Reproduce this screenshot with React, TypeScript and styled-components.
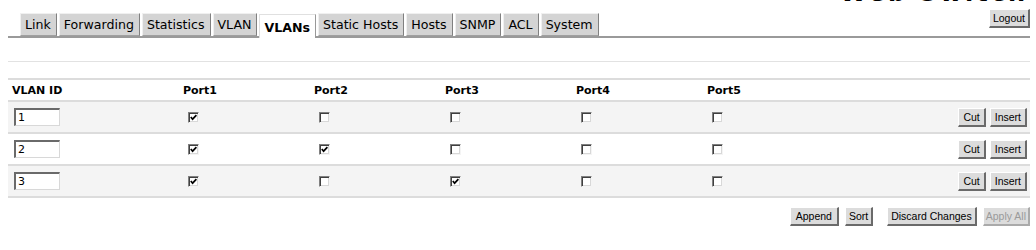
import React from "react";
import styled, { createGlobalStyle, css } from "styled-components";

const GlobalStyle = createGlobalStyle`
  body {
    margin: 0;
    background: #fff;
    font-family: "DejaVu Sans", Verdana, sans-serif;
    color: #000;
  }
`;

const Page = styled.div`
  padding: 0 6px 0 8px;
`;

const TitleClip = styled.div`
  height: 3px;
  overflow: hidden;
  display: flex;
  justify-content: flex-end;
  align-items: flex-end;
  h1 {
    margin: 0 2px 0 0;
    font-size: 24px;
    line-height: 19px;
    font-weight: bold;
    letter-spacing: 3px;
  }
`;

const Header = styled.div`
  display: flex;
  align-items: flex-end;
  justify-content: space-between;
  border-bottom: 2px solid #9a9a9a;
  margin-top: 6px;
  padding-left: 12px;
`;

const Tabs = styled.div`
  display: flex;
  align-items: flex-end;
  gap: 2px;
`;

const Tab = styled.div<{ $active?: boolean }>`
  font-size: 12.6px;
  height: 21px;
  line-height: 22px;
  padding: 0 5px 0 4px;
  background: #d4d4d4;
  border-top: 1px solid #f0f0f0;
  border-left: 1px solid #f0f0f0;
  border-right: 1px solid #808080;
  border-bottom: 1px solid #a0a0a0;
  ${(p) =>
    p.$active &&
    css`
      background: #fff;
      font-weight: bold;
      height: 23px;
      line-height: 25px;
      margin-bottom: -2px;
      border-top: 1px solid #e0e0e0;
      border-left: 1px solid #e0e0e0;
      border-right: 1px solid #999;
      border-bottom: none;
    `}
`;

const Button = styled.button<{ $disabled?: boolean; $pad?: number }>`
  font-family: "Liberation Sans", Tahoma, sans-serif;
  font-size: 10.5px;
  height: 19px;
  padding: 0 ${(p) => p.$pad ?? 4}px;
  background: #dcdcdc;
  color: ${(p) => (p.$disabled ? "#9a9a9a" : "#000")};
  border-top: 1px solid #fff;
  border-left: 1px solid #fff;
  border-right: 2px solid #6a6a6a;
  border-bottom: 2px solid #6a6a6a;
  ${(p) =>
    p.$disabled &&
    css`
      border-right-color: #aaa;
      border-bottom-color: #aaa;
    `}
`;

const LogoutButton = styled(Button)`
  margin-bottom: 8px;
  padding: 0 3px;
`;

const Divider = styled.div`
  height: 1px;
  background: #e2e2e2;
  margin-top: 23px;
`;

const Table = styled.div`
  margin-top: 16px;
  border-bottom: 2px solid #dcdcdc;
`;

const Row = styled.div<{ $shaded?: boolean; $head?: boolean }>`
  display: grid;
  grid-template-columns: 172px repeat(5, 131px) 1fr;
  align-items: center;
  border-top: 2px solid #dcdcdc;
  height: ${(p) => (p.$head ? "20px" : "30px")};
  background: ${(p) => (p.$shaded ? "#f4f4f4" : "#fff")};
`;

const HeadCell = styled.div`
  font-size: 11px;
  font-weight: bold;
  padding-left: 3px;
  padding-top: 1px;
  &:first-child {
    padding-left: 4px;
  }
`;

const Cell = styled.div<{ $right?: boolean }>`
  display: flex;
  align-items: center;
  padding-left: 8px;
  ${(p) =>
    p.$right &&
    css`
      justify-content: flex-end;
      gap: 4px;
      padding-right: 3px;
    `}
  &:first-child {
    padding-left: 6px;
  }
`;

const IdInput = styled.input`
  width: 39px;
  height: 13px;
  padding: 1px 2px;
  font-family: "DejaVu Sans", Verdana, sans-serif;
  font-size: 11px;
  color: #000;
  background: #fff;
  border-top: 2px solid #6a6a6a;
  border-left: 2px solid #6a6a6a;
  border-right: 1px solid #d8d8d8;
  border-bottom: 1px solid #d8d8d8;
  outline: none;
`;

const Box = styled.span`
  display: inline-flex;
  align-items: center;
  justify-content: center;
  width: 9px;
  height: 9px;
  background: #fff;
  border-top: 1px solid #808080;
  border-left: 1px solid #808080;
  border-right: 1px solid #f4f4f4;
  border-bottom: 1px solid #f4f4f4;
  box-shadow: inset 1px 1px 0 #404040, inset -1px -1px 0 #d8d8d8;
`;

const Check = ({ on }: { on: boolean }) => (
  <Box>
    {on && (
      <svg width="7" height="7" viewBox="0 0 7 7">
        <path d="M0.8 3 L2.6 5.2 L6.4 1.2" stroke="#000" strokeWidth="1.7" fill="none" />
      </svg>
    )}
  </Box>
);

const Footer = styled.div`
  display: flex;
  justify-content: flex-end;
  margin-top: 9px;
  gap: 6px;
`;

const GroupGap = styled.span`
  width: 2px;
`;

const tabs = ["Link", "Forwarding", "Statistics", "VLAN", "VLANs", "Static Hosts", "Hosts", "SNMP", "ACL", "System"];

const vlans = [
  { id: "1", ports: [true, false, false, false, false] },
  { id: "2", ports: [true, true, false, false, false] },
  { id: "3", ports: [true, false, true, false, false] },
];

export default function App() {
  return (
    <Page>
      <GlobalStyle />
      <TitleClip>
        <h1>Web Switch</h1>
      </TitleClip>
      <Header>
        <Tabs>
          {tabs.map((t) => (
            <Tab key={t} $active={t === "VLANs"}>
              {t}
            </Tab>
          ))}
        </Tabs>
        <LogoutButton>Logout</LogoutButton>
      </Header>
      <Divider />
      <Table>
        <Row $head>
          <HeadCell>VLAN ID</HeadCell>
          {[1, 2, 3, 4, 5].map((n) => (
            <HeadCell key={n}>Port{n}</HeadCell>
          ))}
          <HeadCell />
        </Row>
        {vlans.map((v, i) => (
          <Row key={v.id} $shaded={i % 2 === 0}>
            <Cell>
              <IdInput defaultValue={v.id} />
            </Cell>
            {v.ports.map((p, j) => (
              <Cell key={j}>
                <Check on={p} />
              </Cell>
            ))}
            <Cell $right>
              <Button>Cut</Button>
              <Button>Insert</Button>
            </Cell>
          </Row>
        ))}
      </Table>
      <Footer>
        <Button $pad={5}>Append</Button>
        <Button $pad={3}>Sort</Button>
        <GroupGap />
        <Button $pad={3}>Discard Changes</Button>
        <Button $pad={2} $disabled>
          Apply All
        </Button>
      </Footer>
    </Page>
  );
}
